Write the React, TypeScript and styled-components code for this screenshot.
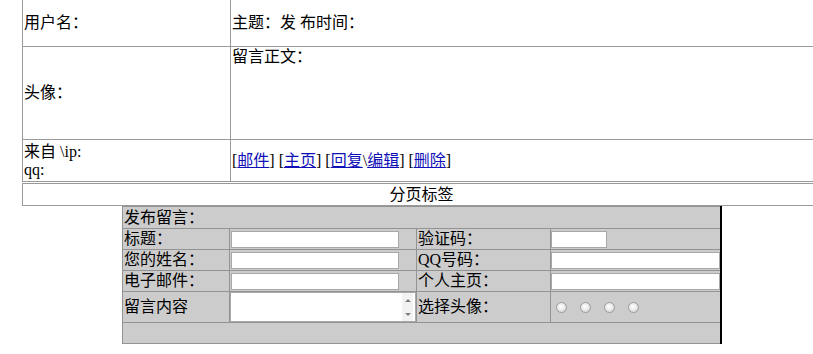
import React from 'react';
import styled, { createGlobalStyle } from 'styled-components';

const GlobalStyle = createGlobalStyle`
  html, body {
    margin: 0;
    padding: 0;
    background: #fff;
    overflow: hidden;
  }
  body {
    font-family: 'Liberation Serif', 'Noto Sans CJK SC', serif;
    font-size: 16px;
    color: #000;
  }
`;

const Page = styled.div`
  padding-left: 22px;
  margin-top: -1px;
`;

const ListTable = styled.div`
  width: 799px;
  box-sizing: border-box;
  display: grid;
  grid-template-columns: 207px 1fr;
  grid-template-rows: 46px 92px 41px;
  gap: 1px;
  padding: 1px;
  background: #9a9a9a;
`;

const Cell = styled.div<{ $valign?: 'top' | 'middle' }>`
  background: #fff;
  display: flex;
  flex-direction: column;
  justify-content: ${p => (p.$valign === 'top' ? 'flex-start' : 'center')};
  padding-left: 1px;
  padding-top: ${p => (p.$valign === 'top' ? '1px' : '0')};
  line-height: 18px;
  white-space: nowrap;
`;

const Pager = styled.div`
  width: 799px;
  box-sizing: border-box;
  margin-top: 1px;
  border: 1px solid #9a9a9a;
  height: 23px;
  line-height: 21px;
  text-align: center;
`;

const Link = styled.a`
  color: #1010b8;
  text-decoration: underline;
`;

const FormTable = styled.div`
  margin-left: 100px;
  width: 600px;
  box-sizing: border-box;
  display: grid;
  grid-template-columns: 106px 186px 133px 169px;
  grid-template-rows: 21px 20px 20px 20px 30px 20px;
  gap: 1px;
  padding: 1px 0 1px 1px;
  background: #939393;
  border-right: 2px solid #000;
`;

const FormCell = styled.div<{ $span?: boolean }>`
  background: #cccccc;
  display: flex;
  align-items: center;
  padding-left: 1px;
  line-height: 18px;
  white-space: nowrap;
  overflow: hidden;
  grid-column: ${p => (p.$span ? '1 / -1' : 'auto')};
`;

const FieldCell = styled.div`
  background: #cccccc;
  display: flex;
  align-items: center;
`;

const TextInput = styled.input<{ $w: number; $flush?: boolean }>`
  width: ${p => p.$w}px;
  height: 17px;
  box-sizing: border-box;
  margin: 0 0 0 ${p => (p.$flush ? 0 : 1)}px;
  padding: 0 2px;
  border: 1px solid #a8a8a8;
  background: #fff;
  font-size: 13px;
  outline: none;
`;

const AreaBox = styled.div`
  width: 100%;
  height: 100%;
  box-sizing: border-box;
  display: flex;
  background: #fff;
  border: 1px solid #a8a8a8;
`;

const Area = styled.textarea`
  flex: 1;
  border: none;
  resize: none;
  outline: none;
  padding: 0 2px;
  margin: 0;
  font-size: 13px;
  background: #fff;
`;

const Spin = styled.div`
  width: 11px;
  margin-right: 2px;
  display: flex;
  flex-direction: column;
  justify-content: space-between;
  align-items: center;
  padding: 6px 0 5px;
  background: #f2f2f2;
`;

const Arrow = styled.span<{ $down?: boolean }>`
  width: 0;
  height: 0;
  border-left: 3px solid transparent;
  border-right: 3px solid transparent;
  ${p =>
    p.$down
      ? 'border-top: 3px solid #7c7c7c;'
      : 'border-bottom: 3px solid #7c7c7c;'}
`;

const RadioRow = styled.div`
  background: #cccccc;
  display: flex;
  align-items: center;
  gap: 13px;
  padding-left: 5px;
`;

const Radio = styled.input`
  appearance: none;
  width: 11px;
  height: 11px;
  margin: 0;
  border: 1px solid #9c9c9c;
  border-radius: 50%;
  background: radial-gradient(circle at 45% 40%, #ffffff 0%, #ececec 45%, #c8c8c8 100%);
`;

const Filler = styled.div`
  background: #cccccc;
  grid-column: 1 / -1;
`;

export default function App() {
  return (
    <>
      <GlobalStyle />
      <Page>
        <ListTable>
          <Cell>用户名：</Cell>
          <Cell>主题：发 布时间：</Cell>
          <Cell>头像：</Cell>
          <Cell $valign="top">留言正文：</Cell>
          <Cell>
            <span>来自 \ip:</span>
            <span>qq:</span>
          </Cell>
          <Cell>
            <span>
              [<Link href="#">邮件</Link>] [<Link href="#">主页</Link>] [
              <Link href="#">回复</Link>\<Link href="#">编辑</Link>] [
              <Link href="#">删除</Link>]
            </span>
          </Cell>
        </ListTable>
        <Pager>分页标签</Pager>
        <FormTable>
          <FormCell $span>发布留言：</FormCell>

          <FormCell>标题：</FormCell>
          <FieldCell>
            <TextInput $w={168} />
          </FieldCell>
          <FormCell>验证码：</FormCell>
          <FieldCell>
            <TextInput $w={56} $flush />
          </FieldCell>

          <FormCell>您的姓名：</FormCell>
          <FieldCell>
            <TextInput $w={168} />
          </FieldCell>
          <FormCell>QQ号码：</FormCell>
          <FieldCell>
            <TextInput $w={169} $flush />
          </FieldCell>

          <FormCell>电子邮件：</FormCell>
          <FieldCell>
            <TextInput $w={168} />
          </FieldCell>
          <FormCell>个人主页：</FormCell>
          <FieldCell>
            <TextInput $w={169} $flush />
          </FieldCell>

          <FormCell>留言内容</FormCell>
          <FieldCell>
            <AreaBox>
              <Area />
              <Spin>
                <Arrow />
                <Arrow $down />
              </Spin>
            </AreaBox>
          </FieldCell>
          <FormCell>选择头像：</FormCell>
          <RadioRow>
            <Radio type="radio" name="face" />
            <Radio type="radio" name="face" />
            <Radio type="radio" name="face" />
            <Radio type="radio" name="face" />
          </RadioRow>

          <Filler />
        </FormTable>
      </Page>
    </>
  );
}
